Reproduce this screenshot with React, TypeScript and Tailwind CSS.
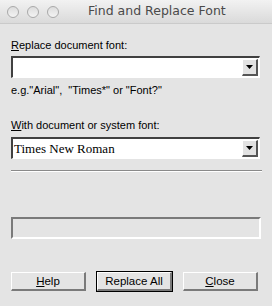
export default function App() {
  const ui = { fontFamily: '"DejaVu Sans", "Liberation Sans", sans-serif' }
  return (
    <div className="w-[272px] h-[306px] bg-[#e4e4e4] overflow-hidden" style={ui}>
      {/* title bar */}
      <div className="h-[24px] flex items-center bg-gradient-to-b from-[#f2f2f2] to-[#dadada] border-b border-[#cacaca]">
        <div className="flex gap-[8px] pl-[7px]">
          <span className="w-[12px] h-[12px] rounded-full border border-[#a9a9a9] bg-gradient-to-b from-[#dcdcdc] to-[#f4f4f4]" />
          <span className="w-[12px] h-[12px] rounded-full border border-[#a9a9a9] bg-gradient-to-b from-[#dcdcdc] to-[#f4f4f4]" />
          <span className="w-[12px] h-[12px] rounded-full border border-[#a9a9a9] bg-gradient-to-b from-[#dcdcdc] to-[#f4f4f4]" />
        </div>
        <div className="ml-[29px] text-[12.5px] text-[#4a4a4a]">Find and Replace Font</div>
      </div>

      <div className="px-[11px] text-[11px] leading-[13px] text-black" style={{ fontFamily: '"Liberation Sans", Arial, sans-serif' }}>
        <div className="mt-[15px]">
          <span className="underline">R</span>eplace document font:
        </div>
        <Combo className="mt-[4px]" value="" />
        <div className="mt-[6px]">e.g."Arial",&nbsp; "Times*" or "Font?"</div>

        <div className="mt-[22px]">
          <span className="underline">W</span>ith document or system font:
        </div>
        <Combo className="mt-[5px]" value="Times New Roman" />

        <div className="mt-[11px] mr-[-1px] border-t border-[#8a8a8a] border-b border-b-white" />

        <div className="mt-[45px] h-[22px] border-t-2 border-l-2 border-t-[#7a7a7a] border-l-[#7a7a7a] border-b-2 border-r-2 border-b-white border-r-white" />

        <div className="mt-[33px] flex items-center justify-between pr-[3px]">
          <Btn label="Help" u="H" />
          <Btn label="Replace All" def />
          <Btn label="Close" u="C" />
        </div>
      </div>
    </div>
  )
}

function Combo({ value, className = '' }: { value: string; className?: string }) {
  return (
    <div className={`h-[22px] w-[249px] flex border-t-2 border-l-2 border-t-[#404040] border-l-[#404040] border-b border-r border-b-white border-r-white bg-white ${className}`}>
      <div
        className="flex-1 flex items-center pl-[1px] text-[13px]"
        style={{ fontFamily: '"Liberation Serif", "Times New Roman", serif' }}
      >
        {value}
      </div>
      <div className="w-[16px] my-[1px] mr-[1px] flex items-center justify-center bg-[#e2e2e2] border-t border-l border-t-white border-l-white border-b-2 border-r-2 border-b-[#555] border-r-[#555]">
        <svg width="7" height="4" viewBox="0 0 7 4">
          <polygon points="0,0 7,0 3.5,4" fill="#000" />
        </svg>
      </div>
    </div>
  )
}

function Btn({ label, u, def }: { label: string; u?: string; def?: boolean }) {
  return (
    <div className={`w-[75px] h-[19px] flex items-center justify-center bg-[#e4e4e4] text-[11.5px] ${def ? 'outline outline-1 outline-black' : ''} border-t border-l border-t-white border-l-white border-b-2 border-r-2 border-b-[#7a7a7a] border-r-[#7a7a7a]`}>
      {u ? (
        <span>
          <span className="underline">{u}</span>
          {label.slice(1)}
        </span>
      ) : (
        label
      )}
    </div>
  )
}
